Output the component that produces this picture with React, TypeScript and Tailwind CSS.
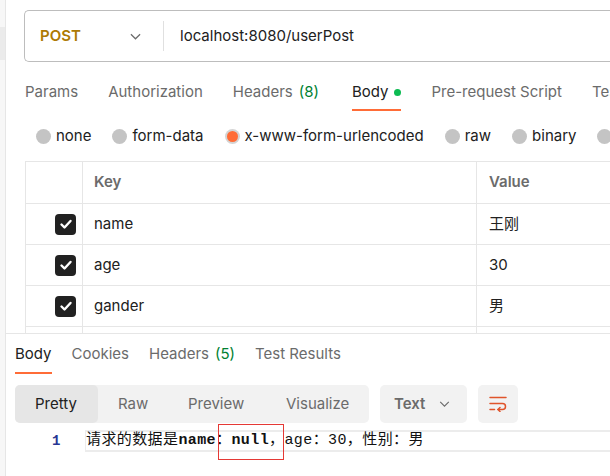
import React from "react";

function Chevron({ className }: { className?: string }) {
  return (
    <svg viewBox="0 0 12 7" className={className} fill="none" stroke="currentColor" strokeWidth={1.3}>
      <path d="M1 1l5 5 5-5" />
    </svg>
  );
}

function CheckBox() {
  return (
    <div className="flex h-[21px] w-[21px] items-center justify-center rounded-[4px] bg-[#212121]">
      <svg viewBox="0 0 14 14" className="h-[14px] w-[14px]" fill="none" stroke="white" strokeWidth={2.4} strokeLinecap="round" strokeLinejoin="round">
        <path d="M2.5 7.5l3 3 6-6.5" />
      </svg>
    </div>
  );
}

function Radio({ label, active }: { label: string; active?: boolean }) {
  return (
    <div className="flex shrink-0 items-center gap-[5px]">
      {active ? (
        <span className="flex h-[15px] w-[15px] items-center justify-center rounded-full bg-[#d4d4d4]">
          <span className="h-[11px] w-[11px] rounded-full bg-[#ff6c37]" />
        </span>
      ) : (
        <span className="h-[15px] w-[15px] rounded-full bg-[#c4c4c4]" />
      )}
      <span>{label}</span>
    </div>
  );
}

function WrapIcon() {
  return (
    <svg viewBox="0 0 18 16" className="h-[16px] w-[18px]" fill="none" stroke="#e0542b" strokeWidth={1.5} strokeLinecap="round">
      <path d="M1 1.5h16" />
      <path d="M1 7.5h12.5a3 3 0 0 1 0 6H9" />
      <path d="M11 11.5l-2 2 2 2" />
      <path d="M1 13.5h4.5" />
    </svg>
  );
}

const rows = [
  { key: "name", value: "王刚" },
  { key: "age", value: "30" },
  { key: "gander", value: "男" },
];

export default function App() {
  return (
    <div className="flex h-[476px] w-[610px] overflow-hidden bg-white font-['Inter','Noto_Sans_CJK_SC',sans-serif] text-[15px] text-[#212121]">
      {/* side strip */}
      <div className="w-[6px] shrink-0 border-r border-[#e6e6e6] bg-[#f7f7f7] pt-[27px]">
        <div className="h-[33px] bg-[#ebebeb]" />
      </div>

      <div className="flex min-w-0 flex-1 flex-col">
        {/* request pane */}
        <div className="h-[334px] shrink-0 overflow-hidden border-b border-[#e6e6e6]">
          <div className="ml-[18px] mt-[10px] flex h-[52px] items-center whitespace-nowrap rounded-l-[5px] border border-r-0 border-[#bdbdbd]">
            <span className="ml-[15px] w-[90px] font-semibold text-[#ad7a03]">POST</span>
            <Chevron className="h-[7px] w-[11px] text-[#6b6b6b]" />
            <div className="ml-[22px] h-[30px] w-px bg-[#e0e0e0]" />
            <span className="ml-[16px]">localhost:8080/userPost</span>
          </div>

          <div className="ml-[19px] mt-[11px] flex h-[38px] gap-[30px] whitespace-nowrap text-[#6b6b6b]">
            <div className="flex items-center">Params</div>
            <div className="flex items-center">Authorization</div>
            <div className="flex items-center pr-[3px]">
              Headers<span className="ml-[6px] text-[#007f31]">(8)</span>
            </div>
            <div className="relative flex items-center text-[#212121]">
              Body<span className="ml-[6px] h-[7px] w-[7px] rounded-full bg-[#0cbb52]" />
              <span className="absolute bottom-0 left-0 right-0 h-[2px] bg-[#ff6c37]" />
            </div>
            <div className="flex items-center">Pre-request Script</div>
            <div className="flex items-center">Tests</div>
          </div>

          <div className="mt-[9px] flex h-[32px] items-center gap-[21px] whitespace-nowrap pl-[30px]">
            <Radio label="none" />
            <Radio label="form-data" />
            <Radio label="x-www-form-urlencoded" active />
            <Radio label="raw" />
            <Radio label="binary" />
            <Radio label="GraphQL" />
          </div>

          <div className="ml-[19px] mt-[9px] border-l border-t border-[#e6e6e6]">
            <div className="grid h-[42px] grid-cols-[57px_394px_1fr] border-b border-[#e6e6e6] font-semibold text-[#6b6b6b]">
              <div className="border-r border-[#e6e6e6]" />
              <div className="flex items-center border-r border-[#e6e6e6] pl-[11px]">Key</div>
              <div className="flex items-center pl-[12px]">Value</div>
            </div>
            {rows.map((r) => (
              <div key={r.key} className="grid h-[41px] grid-cols-[57px_394px_1fr] border-b border-[#e6e6e6]">
                <div className="flex items-center justify-end border-r border-[#e6e6e6] pr-[6px]">
                  <CheckBox />
                </div>
                <div className="flex items-center border-r border-[#e6e6e6] pl-[11px]">{r.key}</div>
                <div className="flex items-center pl-[12px]">{r.value}</div>
              </div>
            ))}
            <div className="grid h-[41px] grid-cols-[57px_394px_1fr]">
              <div className="border-r border-[#e6e6e6]" />
              <div className="border-r border-[#e6e6e6]" />
              <div />
            </div>
          </div>
        </div>

        {/* response pane */}
        <div className="ml-[9px] flex h-[40px] shrink-0 gap-[20px] whitespace-nowrap text-[#6b6b6b]">
          <div className="relative flex items-center text-[#212121]">
            Body
            <span className="absolute bottom-0 left-0 right-0 h-[2px] bg-[#ff6c37]" />
          </div>
          <div className="flex items-center">Cookies</div>
          <div className="flex items-center">
            Headers<span className="ml-[6px] text-[#007f31]">(5)</span>
          </div>
          <div className="flex items-center">Test Results</div>
        </div>

        <div className="ml-[9px] mt-[11px] flex h-[38px] shrink-0 gap-[11px] whitespace-nowrap">
          <div className="flex w-[354px] rounded-[5px] bg-[#f2f2f2] text-[#6b6b6b]">
            <div className="flex w-[83px] items-center rounded-[5px] bg-[#e6e6e6] pl-[20px] text-[#212121]">Pretty</div>
            <div className="flex w-[70px] items-center pl-[20px]">Raw</div>
            <div className="flex w-[98px] items-center pl-[20px]">Preview</div>
            <div className="flex items-center pl-[20px]">Visualize</div>
          </div>
          <div className="flex w-[87px] items-center rounded-[5px] bg-[#f2f2f2] pl-[14px] font-semibold text-[#6b6b6b]">
            Text
            <Chevron className="ml-[14px] h-[6px] w-[11px] text-[#6b6b6b]" />
          </div>
          <div className="flex w-[40px] items-center justify-center rounded-[5px] bg-[#f2f2f2]">
            <WrapIcon />
          </div>
        </div>

        <div className="mt-[7px] flex h-[22px] shrink-0 font-['Liberation_Mono','Noto_Sans_CJK_SC',monospace] text-[15px]">
          <div className="w-[79px] shrink-0 pl-[46px] text-[14px] font-bold leading-[22px] text-[#283593]">1</div>
          <div className="flex flex-1 items-center whitespace-nowrap border-y-2 border-l border-[#ececec] tracking-[0.4px] text-[#111]">
            <span>请求的数据是</span>
            <span className="font-bold">name</span>
            <span className="relative">
              ：<span className="font-bold">null</span>，
              <span className="absolute -bottom-[8px] left-[2px] -top-[6px] right-0 border border-[#e53935]" />
            </span>
            <span>age：30，性别：男</span>
          </div>
        </div>
      </div>
    </div>
  );
}
